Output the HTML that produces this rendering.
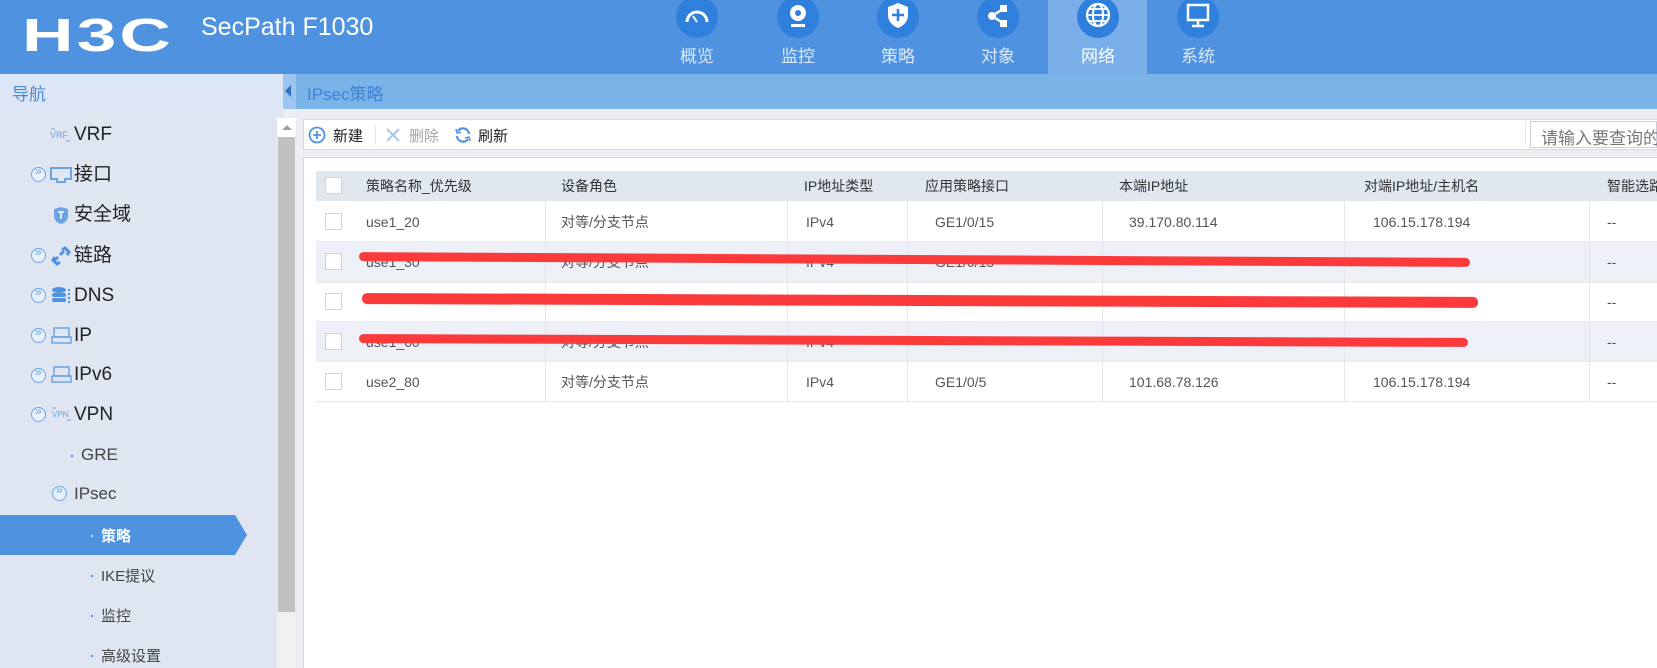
<!DOCTYPE html>
<html><head><meta charset="utf-8"><style>
*{margin:0;padding:0;box-sizing:border-box}
body{width:1657px;height:668px;overflow:hidden;position:relative;background:#eceef3;font-family:"Liberation Sans","Noto Sans CJK SC",sans-serif;color:#333}
.a{position:absolute;white-space:nowrap}
#hdr{left:0;top:0;width:1657px;height:74px;background:#4f92e0}
.tab{position:absolute;top:0;width:100px;height:74px;text-align:center}
.tab .c{position:absolute;left:29px;top:-4px;width:42px;height:42px;border-radius:50%;background:#2f7fdc}
.tab .l{position:absolute;left:0;width:100px;top:42px;font-size:17px;color:#dbe8f8}
#side{left:0;top:74px;width:283px;height:594px;background:#dfe6f2}
.si{position:absolute;font-size:19px;color:#222;line-height:22px;white-space:nowrap}
.ex{position:absolute;width:15px;height:15px;border-radius:50%;border:1.5px solid #6ba3e6;background:#e8f0fa}
.ex:after{content:"»";position:absolute;left:3px;top:-4px;font-size:12px;color:#6ba3e6}
.dot{position:absolute;width:2px;height:2px;background:#4f92e0}
.th{position:absolute;top:171px;height:30px;line-height:30px;font-size:14px;color:#333;white-space:nowrap}
.td{position:absolute;font-size:14px;color:#555;line-height:20px;height:20px;white-space:nowrap}
.cb{position:absolute;left:325px;width:17px;height:17px;border:1px solid #cfd3da;background:#fff}
.vl{position:absolute;width:1px;background:#e3e6ea;top:201px;height:201px}
.red{position:absolute;height:9px;background:#fb3a3c;border-radius:5px}
</style></head><body>
<div id="hdr" class="a"></div>
<div class="a" style="left:22px;top:8px;font-size:46px;font-weight:bold;color:#fff;letter-spacing:2px;transform:scaleX(1.55);transform-origin:left;font-family:'Liberation Sans',sans-serif">H3C</div>
<div class="a" style="left:201px;top:13px;font-size:25px;color:#fff">SecPath F1030</div>
<div class="a" style="left:1048px;top:0;width:99px;height:74px;background:#79aee8"></div>
<div class="tab" style="left:647px"><div class="c"><svg width="42" height="42"><path d="M11 26a10 10 0 0 1 20 0" stroke="#fff" stroke-width="3" fill="none"/><path d="M21 26l-4-6" stroke="#fff" stroke-width="2"/></svg></div><div class="l">概览</div></div>
<div class="tab" style="left:748px"><div class="c"><svg width="42" height="42"><circle cx="21" cy="17" r="8" fill="#fff"/><circle cx="21" cy="17" r="3" fill="#2f7fdc"/><rect x="14" y="28" width="14" height="3" fill="#fff"/></svg></div><div class="l">监控</div></div>
<div class="tab" style="left:848px"><div class="c"><svg width="42" height="42"><path d="M21 7l10 4v8c0 7-5 11-10 13c-5-2-10-6-10-13v-8z" fill="#fff"/><path d="M21 13v12M15 19h12" stroke="#2f7fdc" stroke-width="2.5"/></svg></div><div class="l">策略</div></div>
<div class="tab" style="left:948px"><div class="c"><svg width="42" height="42"><path d="M15 20l11-7M15 20l11 7" stroke="#fff" stroke-width="2.5"/><circle cx="15" cy="20" r="4" fill="#fff"/><rect x="23" y="9" width="7" height="7" fill="#fff"/><rect x="23" y="24" width="7" height="7" fill="#fff"/></svg></div><div class="l">对象</div></div>
<div class="tab" style="left:1048px"><div class="c"><svg width="42" height="42"><circle cx="21" cy="19" r="11" stroke="#fff" stroke-width="2.2" fill="none"/><ellipse cx="21" cy="19" rx="5" ry="11" stroke="#fff" stroke-width="2" fill="none"/><path d="M10 19h22M12 13h18M12 25h18" stroke="#fff" stroke-width="1.8"/></svg></div><div class="l" style="color:#fff">网络</div></div>
<div class="tab" style="left:1148px"><div class="c"><svg width="42" height="42"><rect x="11" y="9" width="20" height="15" stroke="#fff" stroke-width="2.5" fill="none"/><path d="M21 24v5M15 30h12" stroke="#fff" stroke-width="2.5"/></svg></div><div class="l">系统</div></div>

<div id="side" class="a"></div>
<div class="a" style="left:0;top:74px;width:283px;height:35px;background:#dce6f6"></div>
<div class="a" style="left:12px;top:80px;font-size:17px;color:#4a8ad8">导航</div>
<div class="a" style="left:283px;top:74px;width:13px;height:35px;background:#9cc4ef"></div>
<div class="a" style="left:285px;top:85px;width:0;height:0;border-top:6px solid transparent;border-bottom:6px solid transparent;border-right:6px solid #2f6fc0"></div>
<div class="a" style="left:296px;top:74px;width:1361px;height:35px;background:#7ab3e8"></div>
<div class="a" style="left:307px;top:80px;font-size:17px;color:#3f82d6">IPsec策略</div>

<div class="a" style="left:277px;top:118px;width:19px;height:550px;background:#f0f0f0"></div>
<div class="a" style="left:277px;top:118px;width:19px;height:19px;background:#fff"></div>
<div class="a" style="left:282px;top:125px;border-left:5px solid transparent;border-right:5px solid transparent;border-bottom:5px solid #a0a0a0"></div>
<div class="a" style="left:278px;top:137px;width:17px;height:475px;background:#c1c1c1"></div>

<!-- sidebar items -->
<svg class="a" style="left:50px;top:127px" width="22" height="16"><text x="0" y="11" font-size="9" fill="#6ba3e6" font-family="Liberation Sans">VRF</text><path d="M1 2h4M16 14h4" stroke="#6ba3e6"/></svg>
<div class="si" style="left:74px;top:124px">VRF</div>
<div class="ex" style="left:31px;top:167px"></div>
<svg class="a" style="left:50px;top:167px" width="22" height="16"><path d="M1 1h20v11h-6v3h-8v-3h-6z" stroke="#6ba3e6" stroke-width="2" fill="none"/></svg>
<div class="si" style="left:74px;top:164px">接口</div>
<svg class="a" style="left:53px;top:206px" width="16" height="19"><path d="M8 1l7 2v7c0 4-3 7-7 8c-4-1-7-4-7-8v-7z" fill="#6ba3e6"/><path d="M5 6h6M8 6v7" stroke="#fff" stroke-width="1.5"/></svg>
<div class="si" style="left:74px;top:204px">安全域</div>
<div class="ex" style="left:31px;top:248px"></div>
<svg class="a" style="left:51px;top:246px" width="20" height="20"><path d="M3 15l4-4M9 9l4-4M11 4l3-2 4 4-2 3M9 16l-3 2-4-4 2-3" stroke="#4f92e0" stroke-width="3" fill="none"/></svg>
<div class="si" style="left:74px;top:245px">链路</div>
<div class="ex" style="left:31px;top:288px"></div>
<svg class="a" style="left:51px;top:286px" width="22" height="20"><ellipse cx="8" cy="4" rx="7" ry="3" fill="#4f92e0"/><rect x="1" y="7" width="14" height="4" rx="2" fill="#4f92e0"/><rect x="1" y="12" width="14" height="4" rx="2" fill="#4f92e0"/><path d="M18 3v14" stroke="#4f92e0" stroke-width="2" stroke-dasharray="2 2"/></svg>
<div class="si" style="left:74px;top:285px">DNS</div>
<div class="ex" style="left:31px;top:328px"></div>
<svg class="a" style="left:51px;top:327px" width="21" height="18"><rect x="3" y="1" width="15" height="9" stroke="#6ba3e6" fill="none" stroke-width="1.5"/><rect x="1" y="10" width="19" height="6" stroke="#6ba3e6" fill="none" stroke-width="1.5"/></svg>
<div class="si" style="left:74px;top:325px">IP</div>
<div class="ex" style="left:31px;top:368px"></div>
<svg class="a" style="left:51px;top:366px" width="21" height="18"><rect x="3" y="1" width="15" height="9" stroke="#6ba3e6" fill="none" stroke-width="1.5"/><rect x="1" y="10" width="19" height="6" stroke="#6ba3e6" fill="none" stroke-width="1.5"/></svg>
<div class="si" style="left:74px;top:364px">IPv6</div>
<div class="ex" style="left:31px;top:407px"></div>
<svg class="a" style="left:51px;top:406px" width="22" height="16"><text x="1" y="11" font-size="8" fill="#6ba3e6" font-family="Liberation Sans">VPN</text><path d="M1 2h4M16 14h4" stroke="#6ba3e6"/></svg>
<div class="si" style="left:74px;top:404px">VPN</div>
<div class="dot" style="left:71px;top:455px"></div>
<div class="a" style="left:81px;top:445px;font-size:17px;color:#444;line-height:20px">GRE</div>
<div class="ex" style="left:52px;top:486px"></div>
<div class="a" style="left:74px;top:484px;font-size:17px;color:#444;line-height:20px">IPsec</div>
<svg class="a" style="left:0;top:515px" width="250" height="40"><path d="M0 0h235l12 20-12 20H0z" fill="#4f92e0"/></svg>
<div class="dot" style="left:91px;top:535px;background:#cfe2fa"></div>
<div class="a" style="left:101px;top:525px;font-size:15px;color:#fff;font-weight:bold">策略</div>
<div class="dot" style="left:91px;top:575px"></div>
<div class="a" style="left:101px;top:565px;font-size:15px;color:#444">IKE提议</div>
<div class="dot" style="left:91px;top:615px"></div>
<div class="a" style="left:101px;top:605px;font-size:15px;color:#444">监控</div>
<div class="dot" style="left:91px;top:655px"></div>
<div class="a" style="left:101px;top:645px;font-size:15px;color:#444">高级设置</div>

<!-- toolbar -->
<div class="a" style="left:303px;top:119px;width:1354px;height:31px;background:#fff;border:1px solid #d3d9e6;border-right:none"></div>
<svg class="a" style="left:308px;top:126px" width="18" height="18"><circle cx="9" cy="9" r="7.5" stroke="#4f92e0" stroke-width="1.8" fill="none"/><path d="M9 5v8M5 9h8" stroke="#4f92e0" stroke-width="1.8"/></svg>
<div class="a" style="left:333px;top:125px;font-size:15px;color:#222">新建</div>
<div class="a" style="left:375px;top:125px;width:1px;height:20px;background:#e2e5ea"></div>
<svg class="a" style="left:385px;top:127px" width="16" height="16"><path d="M2 2l12 12M14 2L2 14" stroke="#a9c8ef" stroke-width="2"/></svg>
<div class="a" style="left:409px;top:125px;font-size:15px;color:#a6a6a6">删除</div>
<svg class="a" style="left:454px;top:126px" width="18" height="18"><path d="M15 8a6 6 0 0 0-11-3M3 10a6 6 0 0 0 11 3" stroke="#4f92e0" stroke-width="2.2" fill="none"/><path d="M2 3l1 4 4-1M16 15l-1-4-4 1" stroke="#4f92e0" stroke-width="1.5" fill="none"/></svg>
<div class="a" style="left:478px;top:125px;font-size:15px;color:#222">刷新</div>
<div class="a" style="left:1525px;top:123px;width:1px;height:22px;background:#e2e5ea"></div>
<div class="a" style="left:1530px;top:121px;width:127px;height:27px;border:1px solid #c8d0dc;background:#fff"></div>
<div class="a" style="left:1541px;top:124px;font-size:17px;color:#777">请输入要查询的</div>

<!-- table panel -->
<div class="a" style="left:303px;top:157px;width:1354px;height:511px;background:#fff;border-left:1px solid #d3d9e6;border-top:1px solid #d3d9e6"></div>
<div class="a" style="left:316px;top:171px;width:1341px;height:30px;background:#e1e7ef"></div>
<div class="cb" style="top:177px"></div>
<div class="th" style="left:366px">策略名称_优先级</div>
<div class="th" style="left:561px">设备角色</div>
<div class="th" style="left:804px">IP地址类型</div>
<div class="th" style="left:925px">应用策略接口</div>
<div class="th" style="left:1119px">本端IP地址</div>
<div class="th" style="left:1364px">对端IP地址/主机名</div>
<div class="th" style="left:1607px">智能选路</div>

<div class="a" style="left:316px;top:242px;width:1341px;height:40px;background:#edf0f7"></div>
<div class="a" style="left:316px;top:322px;width:1341px;height:40px;background:#edf0f7"></div>
<div class="a" style="left:316px;top:241px;width:1341px;height:1px;background:#e8ebef"></div>
<div class="a" style="left:316px;top:282px;width:1341px;height:1px;background:#e8ebef"></div>
<div class="a" style="left:316px;top:321px;width:1341px;height:1px;background:#e8ebef"></div>
<div class="a" style="left:316px;top:361px;width:1341px;height:1px;background:#e8ebef"></div>
<div class="a" style="left:316px;top:401px;width:1341px;height:1px;background:#e3e6ea"></div>
<div class="vl" style="left:545px"></div><div class="vl" style="left:787px"></div><div class="vl" style="left:907px"></div><div class="vl" style="left:1102px"></div><div class="vl" style="left:1344px"></div><div class="vl" style="left:1589px"></div>

<div class="cb" style="top:213px"></div><div class="cb" style="top:253px"></div><div class="cb" style="top:293px"></div><div class="cb" style="top:333px"></div><div class="cb" style="top:373px"></div>

<div class="td" style="left:366px;top:212px">use1_20</div><div class="td" style="left:561px;top:212px">对等/分支节点</div><div class="td" style="left:806px;top:212px">IPv4</div><div class="td" style="left:935px;top:212px">GE1/0/15</div><div class="td" style="left:1129px;top:212px">39.170.80.114</div><div class="td" style="left:1373px;top:212px">106.15.178.194</div><div class="td" style="left:1607px;top:212px">--</div>
<div class="td" style="left:366px;top:252px">use1_30</div><div class="td" style="left:561px;top:252px">对等/分支节点</div><div class="td" style="left:806px;top:252px">IPv4</div><div class="td" style="left:935px;top:252px">GE1/0/15</div><div class="td" style="left:1607px;top:252px">--</div>
<div class="td" style="left:1607px;top:292px">--</div>
<div class="td" style="left:366px;top:332px">use1_60</div><div class="td" style="left:561px;top:332px">对等/分支节点</div><div class="td" style="left:806px;top:332px">IPv4</div><div class="td" style="left:1607px;top:332px">--</div>
<div class="td" style="left:366px;top:372px">use2_80</div><div class="td" style="left:561px;top:372px">对等/分支节点</div><div class="td" style="left:806px;top:372px">IPv4</div><div class="td" style="left:935px;top:372px">GE1/0/5</div><div class="td" style="left:1129px;top:372px">101.68.78.126</div><div class="td" style="left:1373px;top:372px">106.15.178.194</div><div class="td" style="left:1607px;top:372px">--</div>

<div class="red" style="left:359px;top:255px;width:1111px;transform:rotate(0.3deg)"></div>
<div class="red" style="left:362px;top:295px;width:1116px;height:11px;transform:rotate(0.2deg)"></div>
<div class="red" style="left:359px;top:336px;width:1109px;transform:rotate(0.2deg)"></div>
</body></html>
